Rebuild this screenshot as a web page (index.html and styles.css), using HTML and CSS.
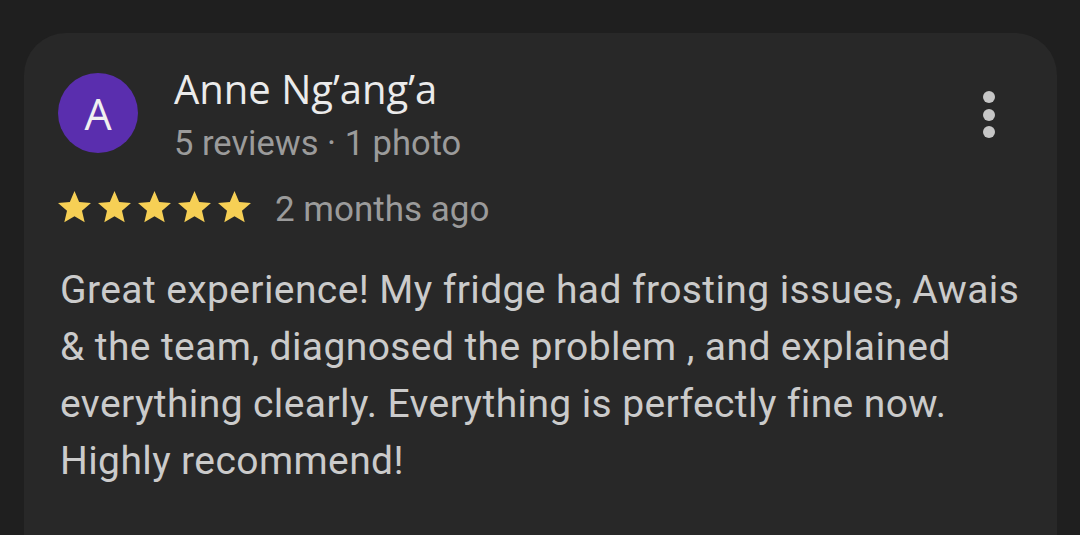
FILE: index.html
```html
<!DOCTYPE html>
<html>
<head>
<meta charset="utf-8">
<link rel="stylesheet" href="styles.css">
</head>
<body>
<div class="card">
  <div class="header">
    <div class="avatar">A</div>
    <div class="who">
      <div class="name">Anne Ng’ang’a</div>
      <div class="meta">5 reviews · 1 photo</div>
    </div>
    <div class="more" aria-label="More options">
      <span class="dot"></span><span class="dot"></span><span class="dot"></span>
    </div>
  </div>
  <div class="rating">
    <div class="stars">
      <svg class="star" viewBox="2 2 20 19"><path d="M12 17.27L18.18 21l-1.64-7.03L22 9.24l-7.19-.61L12 2 9.19 8.63 2 9.24l5.46 4.73L5.82 21z"/></svg>
      <svg class="star" viewBox="2 2 20 19"><path d="M12 17.27L18.18 21l-1.64-7.03L22 9.24l-7.19-.61L12 2 9.19 8.63 2 9.24l5.46 4.73L5.82 21z"/></svg>
      <svg class="star" viewBox="2 2 20 19"><path d="M12 17.27L18.18 21l-1.64-7.03L22 9.24l-7.19-.61L12 2 9.19 8.63 2 9.24l5.46 4.73L5.82 21z"/></svg>
      <svg class="star" viewBox="2 2 20 19"><path d="M12 17.27L18.18 21l-1.64-7.03L22 9.24l-7.19-.61L12 2 9.19 8.63 2 9.24l5.46 4.73L5.82 21z"/></svg>
      <svg class="star" viewBox="2 2 20 19"><path d="M12 17.27L18.18 21l-1.64-7.03L22 9.24l-7.19-.61L12 2 9.19 8.63 2 9.24l5.46 4.73L5.82 21z"/></svg>
    </div>
    <span class="when">2 months ago</span>
  </div>
  <p class="text">Great experience! My fridge had frosting issues, Awais &amp; the team, diagnosed the problem , and explained everything clearly. Everything is perfectly fine now. Highly recommend!</p>
</div>
</body>
</html>
```
FILE: styles.css
```css
html, body {
  margin: 0;
  padding: 0;
  background: #1f1f1f;
  height: 100%;
  overflow: hidden;
}
body {
  padding: 33px 23px 0 24px;
  box-sizing: border-box;
  font-family: Roboto, "Liberation Sans", sans-serif;
}
.card {
  background: #282828;
  border-radius: 42px 42px 0 0;
  height: 502px;
  padding: 31px 36px 0 36px;
  box-sizing: border-box;
}
.header {
  display: flex;
  align-items: flex-start;
}
.avatar {
  width: 80px;
  height: 80px;
  margin: 9px 0 0 -2px;
  border-radius: 50%;
  background: #5a2eae;
  color: #f0f0f0;
  font-family: "Open Sans", Roboto, sans-serif;
  font-weight: 500;
  font-size: 43px;
  display: flex;
  align-items: center;
  justify-content: center;
  flex: none;
}
.who {
  margin-left: 36px;
  flex: 1;
}
.name {
  color: #ebebeb;
  font-family: "Open Sans", Roboto, sans-serif;
  font-size: 40px;
  line-height: 50px;
}
.meta {
  color: #9b9b9b;
  font-size: 34.5px;
  line-height: 58px;
}
.more {
  display: flex;
  flex-direction: column;
  gap: 5.5px;
  margin: 27px 26px 0 0;
}
.dot {
  width: 12px;
  height: 12px;
  border-radius: 50%;
  background: #c6c6c6;
}
.rating {
  display: flex;
  align-items: center;
  margin-top: 13px;
  height: 50px;
  line-height: 50px;
}
.stars {
  display: flex;
  gap: 7px;
  margin: 0 0 6px -2px;
}
.star {
  width: 33px;
  height: 31.4px;
  fill: #f6cf55;
}
.when {
  margin-left: 24px;
  color: #9b9b9b;
  font-size: 35px;
}
.text {
  margin: 27px -30px 0 0;
  color: #cbcbcb;
  font-size: 39px;
  letter-spacing: 0.4px;
  line-height: 57px;
}
```
